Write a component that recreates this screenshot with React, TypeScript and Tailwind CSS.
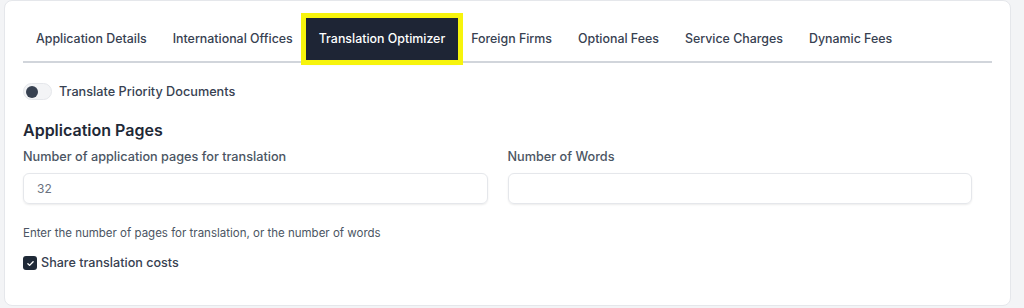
import { useState } from 'react';

const tabs = [
  'Application Details',
  'International Offices',
  'Translation Optimizer',
  'Foreign Firms',
  'Optional Fees',
  'Service Charges',
  'Dynamic Fees',
];

export default function App() {
  const [active, setActive] = useState('Translation Optimizer');
  const [priority, setPriority] = useState(false);
  const [share, setShare] = useState(true);

  return (
    <div
      className="h-[308px] w-[1024px] bg-[#f3f4f6] pl-1 pr-[13px] pb-[2px]"
      style={{ fontFamily: 'Inter, "Noto Sans", sans-serif' }}
    >
      <div className="h-full rounded-lg border border-[#e5e7eb] bg-white px-[18px] pt-[17px]">
        {/* tabs */}
        <div className="flex border-b-2 border-[#d1d5db]">
          {tabs.map((t) => (
            <button
              key={t}
              onClick={() => setActive(t)}
              className={`mb-[1px] h-[42px] px-[13px] text-[12.4px] font-medium ${
                active === t
                  ? 'bg-[#1e2535] text-white outline-[5px] outline-solid outline-[#f7f40c] shadow-[0_2px_4px_rgba(0,0,0,0.35)]'
                  : 'text-[#374151]'
              }`}
            >
              {t}
            </button>
          ))}
        </div>

        {/* toggle */}
        <div className="mt-[19px] flex items-center gap-[7px]">
          <button
            onClick={() => setPriority(!priority)}
            className="flex h-[17px] w-[29px] items-center rounded-full border border-[#e5e7eb] bg-[#f3f4f6] px-[2px]"
          >
            <span
              className={`h-[12px] w-[12px] rounded-full bg-[#374151] ${priority ? 'translate-x-[12px]' : ''}`}
            />
          </button>
          <span className="text-[12.7px] font-medium text-[#374151]">Translate Priority Documents</span>
        </div>

        {/* application pages */}
        <h2 className="mt-[17px] text-[16px] font-semibold leading-6 text-[#1f2937]">Application Pages</h2>

        <div className="mt-[5px] grid grid-cols-2 gap-x-5 pr-5">
          <div>
            <label className="block text-[12.7px] font-medium leading-5 text-[#4b5563]">
              Number of application pages for translation
            </label>
            <input
              defaultValue="32"
              className="mt-[6px] h-[31px] w-full rounded-md border border-[#e5e7eb] px-[13px] text-[12px] text-[#6b7280] shadow-[0_1px_2px_rgba(0,0,0,0.08)] outline-none"
            />
          </div>
          <div>
            <label className="block text-[12.7px] font-medium leading-5 text-[#4b5563]">Number of Words</label>
            <input className="mt-[6px] h-[31px] w-full rounded-md border border-[#e5e7eb] px-[13px] text-[12px] text-[#6b7280] shadow-[0_1px_2px_rgba(0,0,0,0.08)] outline-none" />
          </div>
        </div>

        <p className="mt-[21px] text-[11.5px] leading-4 text-[#4b5563]">
          Enter the number of pages for translation, or the number of words
        </p>

        <label className="mt-[13px] flex items-center gap-[4px]">
          <button
            onClick={() => setShare(!share)}
            className={`flex h-[14px] w-[14px] items-center justify-center rounded-[3px] ${
              share ? 'bg-[#1f2937]' : 'border border-[#9ca3af] bg-white'
            }`}
          >
            {share && (
              <svg width="9" height="9" viewBox="0 0 12 12" fill="none">
                <path d="M2.5 6.2l2.3 2.3 4.7-4.9" stroke="white" strokeWidth="1.8" strokeLinecap="round" strokeLinejoin="round" />
              </svg>
            )}
          </button>
          <span className="text-[12.6px] font-medium text-[#374151]">Share translation costs</span>
        </label>
      </div>
    </div>
  );
}
